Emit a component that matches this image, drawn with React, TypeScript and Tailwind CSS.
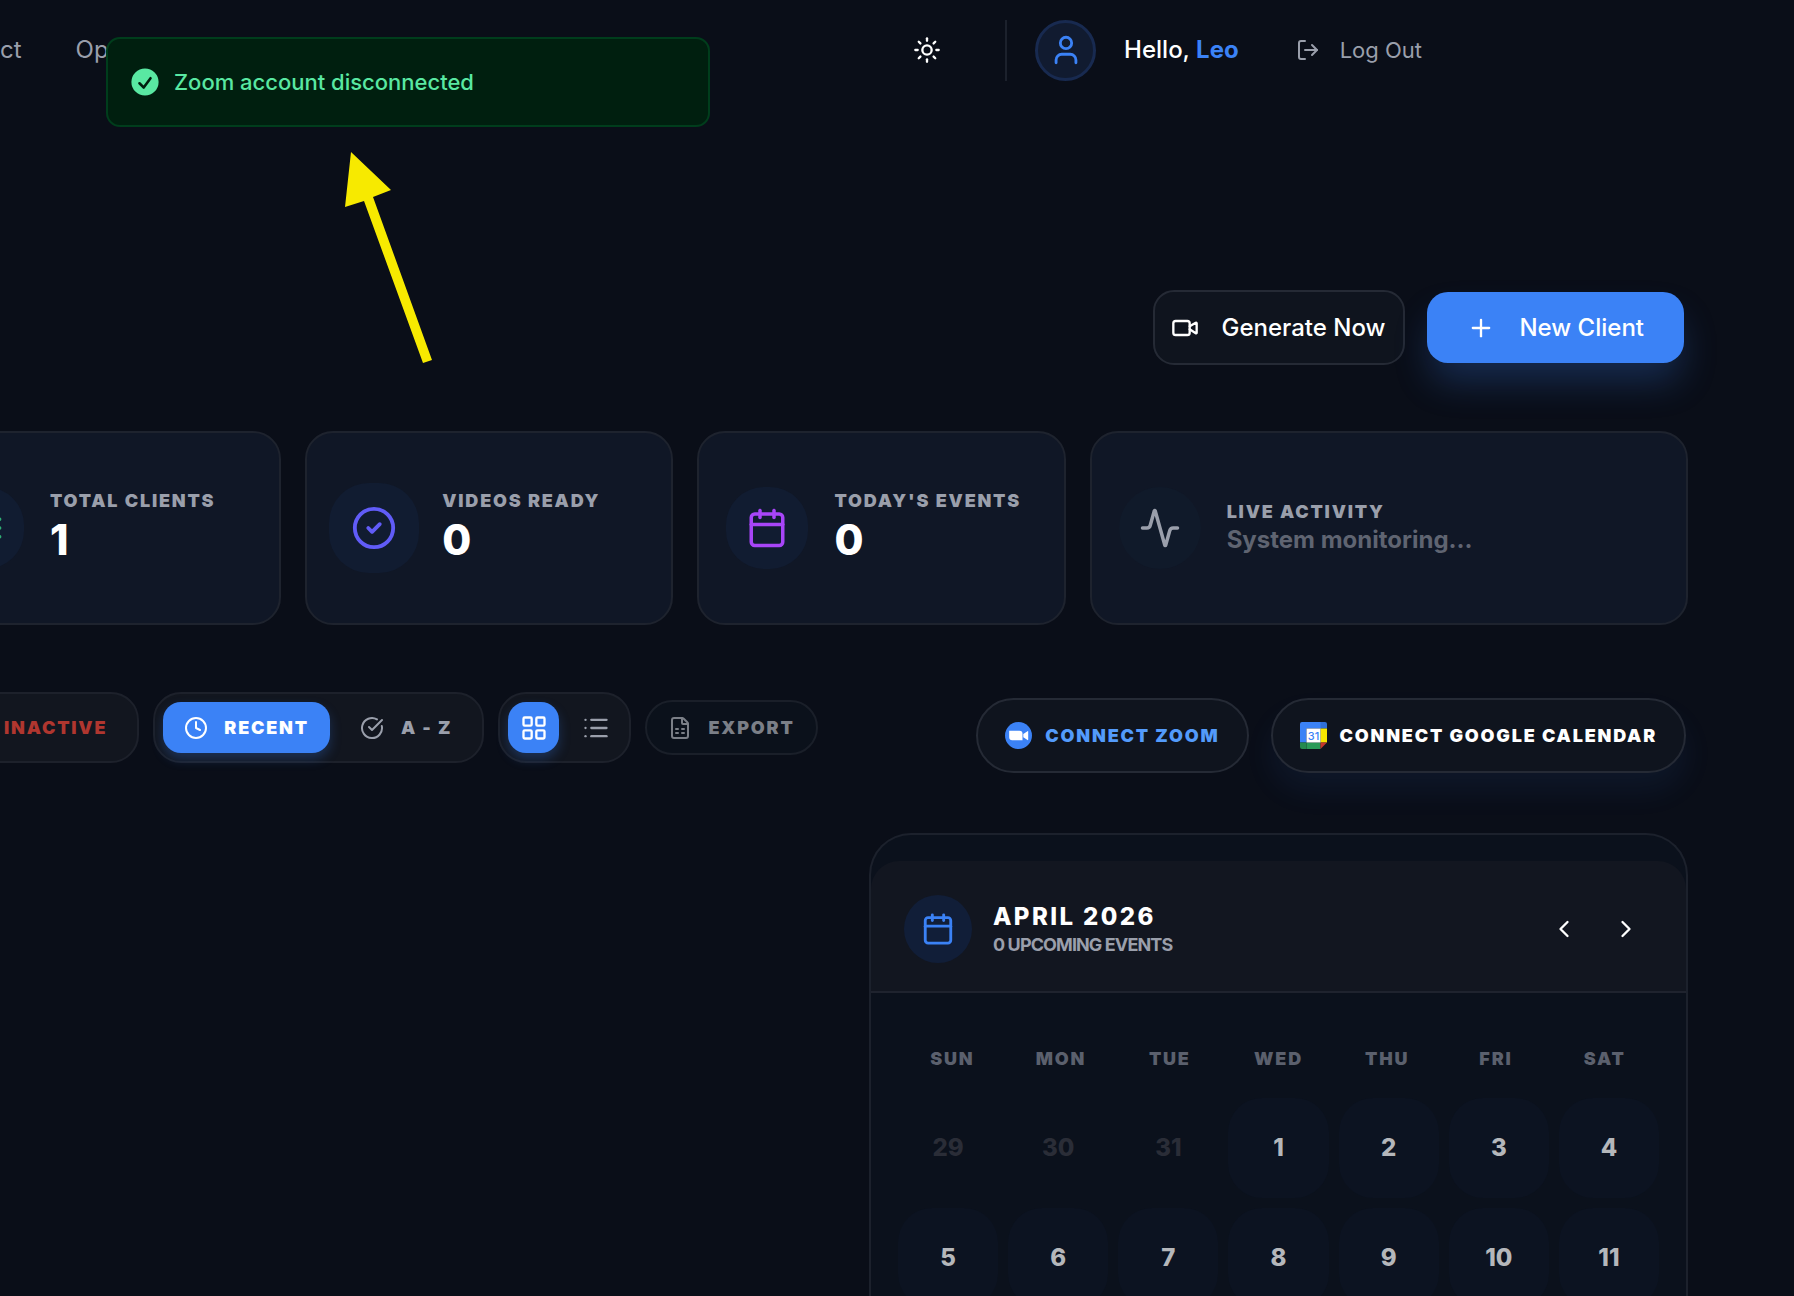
import React from 'react';
import {
  Activity,
  Calendar,
  ChevronLeft,
  ChevronRight,
  CircleCheck,
  CircleCheckBig,
  Clock,
  FileSpreadsheet,
  LayoutGrid,
  List,
  LogOut,
  Plus,
  Sun,
  User,
  Video,
} from 'lucide-react';

const Toast: React.FC = () => (
  <div
    role="status"
    className="absolute left-[106px] top-[37px] w-[604px] h-[90px] pl-5 flex items-center gap-3 bg-[#001f0f] border-2 border-[#003d1c] rounded-[14px] text-[#59e8a2]"
  >
    <svg width="34" height="34" viewBox="0 0 20 20" fill="currentColor" aria-hidden="true">
      <path
        fillRule="evenodd"
        clipRule="evenodd"
        d="M10 18a8 8 0 100-16 8 8 0 000 16zm3.857-9.809a.75.75 0 00-1.214-.882l-3.483 4.79-1.88-1.88a.75.75 0 10-1.06 1.061l2.5 2.5a.75.75 0 001.137-.089l4-5.5z"
      />
    </svg>
    <span className="text-[22px] font-medium">Zoom account disconnected</span>
  </div>
);

const Pointer: React.FC = () => (
  <svg
    className="absolute left-[340px] top-[150px] pointer-events-none"
    width="100"
    height="216"
    viewBox="340 150 100 216"
    fill="#f7ea00"
    aria-hidden="true"
  >
    <path d="M351 152 L391 190 L373 197 L432 360 L423 363 L364 201 L345 207 Z" />
  </svg>
);

const Header: React.FC = () => (
  <header className="h-[100px] flex items-center justify-between pr-[372px]">
    <nav className="flex gap-[54px] text-2xl text-[#9a9fab]">
      <a href="#contact">ct</a>
      <a href="#options">Op</a>
    </nav>
    <div className="flex items-center">
      <button aria-label="Toggle theme" className="mr-16">
        <Sun size={28} />
      </button>
      <div className="w-[2px] h-[61px] bg-[#1c212c] mr-7" />
      <div className="size-[61px] rounded-full bg-[#111b30] border-3 border-[#182a50] flex items-center justify-center text-[#3b82f6] mr-7">
        <User size={34} />
      </div>
      <span className="text-2xl font-medium mr-[57px]">
        Hello, <span className="font-bold text-[#3b82f6]">Leo</span>
      </span>
      <button className="flex items-center gap-5 text-[22px] text-[#9a9fab]">
        <LogOut size={24} />
        Log Out
      </button>
    </div>
  </header>
);

// only the tail of the rows icon is on screen
const RowsIcon: React.FC = () => (
  <svg width="42" height="42" viewBox="0 0 24 24" fill="none" stroke="currentColor" strokeWidth="2" strokeLinecap="round">
    <path d="M3 7h18.500M3 12h18.500M3 17h18.500" />
  </svg>
);

const stats = [
  {
    label: 'TOTAL CLIENTS',
    value: '1',
    icon: <RowsIcon />,
    box: 'size-[82px] rounded-[38px] bg-[#111c31] text-[#2fae74] ml-[5px] mr-[3px]',
  },
  {
    label: 'VIDEOS READY',
    value: '0',
    icon: <CircleCheck size={46} />,
    box: 'size-[90px] rounded-[40px] bg-[#111c31] text-[#615cf8]',
  },
  {
    label: "TODAY'S EVENTS",
    value: '0',
    icon: <Calendar size={42} />,
    box: 'size-[82px] rounded-[38px] bg-[#111c31] text-[#a845f8] ml-[5px] mr-[3px]',
  },
];

const Stats: React.FC = () => (
  <section className="grid grid-cols-[368fr_368fr_368fr_598fr] gap-6 mt-[66px] -ml-[87px]">
    {stats.map((s) => (
      <div
        key={s.label}
        className="h-[194px] flex items-center gap-[23px] px-[22px] bg-[#101726] border-2 border-[#1e232e] rounded-[28px]"
      >
        <div className={`shrink-0 flex items-center justify-center ${s.box}`}>{s.icon}</div>
        <div className="whitespace-nowrap">
          <p className="text-[18px] leading-[24px] font-black tracking-widest text-[#9a9fab]">{s.label}</p>
          <p className="text-[42px] leading-[54px] font-extrabold">{s.value}</p>
        </div>
      </div>
    ))}
    <div className="h-[194px] flex items-center gap-[23px] px-[22px] bg-[#101726] border-2 border-[#1e232e] rounded-[28px]">
      <div className="shrink-0 size-[82px] ml-[5px] mr-[3px] rounded-full bg-[#101a2a] text-[#9a9fab] flex items-center justify-center">
        <Activity size={42} />
      </div>
      <div className="whitespace-nowrap">
        <p className="text-[18px] leading-[24px] font-black tracking-widest text-[#9a9fab]">LIVE ACTIVITY</p>
        <p className="text-2xl leading-[32px] font-bold text-[#5f6471]">System monitoring...</p>
      </div>
    </div>
  </section>
);

const ZoomLogo: React.FC = () => (
  <svg width="27" height="27" viewBox="0 0 27 27" aria-hidden="true">
    <circle cx="13.5" cy="13.5" r="13.5" fill="#3b82f6" />
    <path
      fill="#fff"
      d="M4.200 8.800h10.300a3 3 0 0 1 3 3v6.400h-10.300a3 3 0 0 1-3-3zM18.300 12l4.200-2.800q.7-.4.7.4v8q0 .8-.7.4l-4.200-2.800z"
    />
  </svg>
);

const GoogleCalendarLogo: React.FC = () => (
  <svg width="27" height="27" viewBox="0 0 27 27" aria-hidden="true">
    <path fill="#3b82f6" d="M2 0h19v6.500H6.500V20.500H0V2a2 2 0 0 1 2-2z" />
    <path fill="#2f6fd6" d="M20.500 0H25a2 2 0 0 1 2 2v4.500h-6.500z" />
    <path fill="#f7e600" d="M20.500 6.500H27v14h-6.500z" />
    <path fill="#2a9a58" d="M6.500 20.500h14V27h-14z" />
    <path fill="#248a4e" d="M0 20.500h6.500V27H2a2 2 0 0 1-2-2z" />
    <path fill="#c5362d" d="M20.500 20.500H27L20.500 27z" />
    <path fill="#fff" d="M6.500 6.500h14v14h-14z" />
    <text x="13.5" y="17.500" textAnchor="middle" fontSize="11" fontWeight="500" fill="#3b82f6" className="tracking-normal">
      31
    </text>
  </svg>
);

const Toolbar: React.FC = () => (
  <section className="flex items-start justify-between mt-[67px] pr-[2px] text-[18px] font-black tracking-widest whitespace-nowrap">
    <div className="flex items-center gap-[14px]">
      <div className="h-[71px] -ml-10 pl-[42px] pr-[30px] flex items-center bg-[#12161f] border-2 border-[#1d212b] rounded-[28px]">
        <button className="text-[#b0362f]">INACTIVE</button>
      </div>
      <div className="h-[71px] px-2 flex items-center gap-2 bg-[#12161f] border-2 border-[#1d212b] rounded-[28px]">
        <button className="h-[51px] px-[21px] flex items-center gap-4 bg-[#3b82f6] rounded-[18px] shadow-[0_6px_12px_#3b82f640]">
          <Clock size={24} />
          RECENT
        </button>
        <button className="h-[51px] px-[22px] flex items-center gap-[17px] text-[#9a9fab]">
          <CircleCheckBig size={24} />A - Z
        </button>
      </div>
      <div className="h-[71px] px-2 flex items-center gap-[11px] bg-[#12161f] border-2 border-[#1d212b] rounded-[28px]">
        <button
          aria-label="Grid view"
          className="size-[51px] flex items-center justify-center bg-[#3b82f6] rounded-[18px] shadow-[0_6px_12px_#3b82f640]"
        >
          <LayoutGrid size={28} />
        </button>
        <button aria-label="List view" className="size-[51px] flex items-center justify-center text-[#9a9fab]">
          <List size={28} />
        </button>
      </div>
      <button className="h-[55px] px-[21px] flex items-center gap-4 text-[#7b7f87] bg-[#0b111b] border-2 border-[#1a1f29] rounded-full">
        <FileSpreadsheet size={24} />
        EXPORT
      </button>
    </div>

    <div className="flex gap-[22px] mt-[6px]">
      <button className="h-[75px] px-[27px] flex items-center gap-[13px] text-[#539bfb] bg-[#0f141e] border-2 border-[#252a35] rounded-full">
        <ZoomLogo />
        CONNECT ZOOM
      </button>
      <button className="h-[75px] px-[27px] flex items-center gap-[13px] bg-[#0f141e] border-2 border-[#252a35] rounded-full shadow-[0_18px_30px_#3b82f614]">
        <GoogleCalendarLogo />
        CONNECT GOOGLE CALENDAR
      </button>
    </div>
  </section>
);

const weekdays = ['SUN', 'MON', 'TUE', 'WED', 'THU', 'FRI', 'SAT'];
const days = [29, 30, 31, 1, 2, 3, 4, 5, 6, 7, 8, 9, 10, 11];

const CalendarPanel: React.FC = () => (
  <section className="w-[819px] ml-auto mt-[60px] pt-[26px] bg-[#0b111c] border-2 border-b-0 border-[#1c212c] rounded-t-[42px]">
    <div className="h-[132px] flex items-center pl-[33px] pr-[29px] pt-[6px] bg-[#121620] border-b-2 border-[#1f232e] rounded-t-[28px]">
      <div className="size-[68px] rounded-full bg-[#111e38] text-[#3b82f6] flex items-center justify-center">
        <Calendar size={34} />
      </div>
      <div className="ml-[21px]">
        <h2 className="text-2xl leading-[32px] font-extrabold tracking-widest">APRIL 2026</h2>
        <p className="text-[18px] leading-[24px] font-bold tracking-tighter text-[#9a9fab]">0 UPCOMING EVENTS</p>
      </div>
      <div className="ml-auto flex">
        <button aria-label="Previous month" className="w-[62px] h-[62px] flex items-center justify-center">
          <ChevronLeft size={28} />
        </button>
        <button aria-label="Next month" className="w-[62px] h-[62px] flex items-center justify-center">
          <ChevronRight size={28} />
        </button>
      </div>
    </div>
    <div className="px-[27px] pt-[53px]">
      <div className="grid grid-cols-7 text-center text-[18px] leading-[26px] font-black tracking-widest text-[#5b606d]">
        {weekdays.map((day) => (
          <span key={day}>{day}</span>
        ))}
      </div>
      <div className="grid grid-cols-7 gap-[10px] mt-[26px] text-2xl font-extrabold">
        {days.map((day) => (
          <button
            key={day}
            className={day > 11 ? 'h-[100px] text-[#2a2d37]' : 'h-[100px] rounded-[34px] bg-[#0c1321] text-[#b5b7bb]'}
          >
            {day}
          </button>
        ))}
      </div>
    </div>
  </section>
);

const App: React.FC = () => {
  return (
    <div className="relative h-screen overflow-hidden bg-[#0a0e18] text-white font-['Inter',sans-serif]">
      <Header />
      <main className="pt-[190px] pr-[106px]">
        <div className="flex items-center justify-end gap-[22px] pr-1">
          <button className="h-[75px] pl-4 pr-[18px] flex items-center gap-[22px] text-2xl font-medium bg-[#0f141e] border-2 border-[#252a35] rounded-[21px]">
            <Video size={28} />
            Generate Now
          </button>
          <button className="h-[71px] px-10 flex items-center gap-6 text-2xl font-medium bg-[#3b82f6] rounded-[21px] shadow-[0_22px_36px_-4px_#3b82f640]">
            <Plus size={28} />
            New Client
          </button>
        </div>
        <Stats />
        <Toolbar />
        <CalendarPanel />
      </main>
      <Toast />
      <Pointer />
    </div>
  );
};

export default App;
